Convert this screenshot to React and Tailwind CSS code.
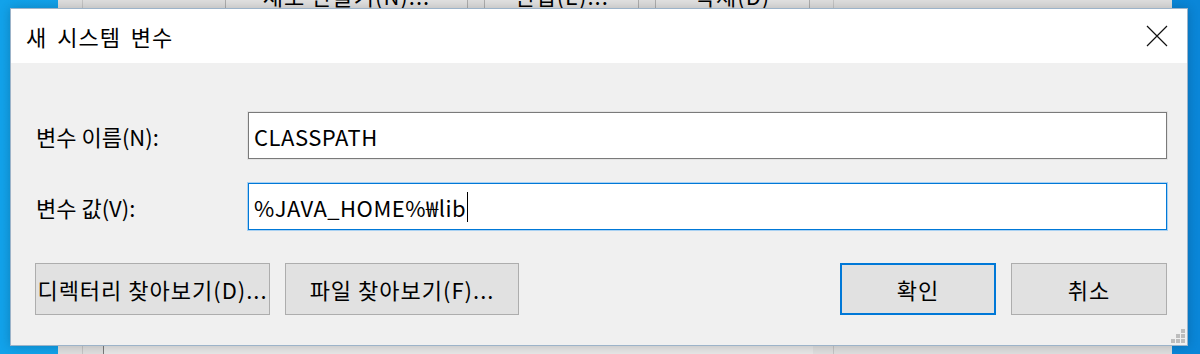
import React from "react";

const font = { fontFamily: '"Noto Sans CJK KR", "Noto Sans", sans-serif' };

function BgButton({ w, label }) {
  return (
    <div
      className={`${w} h-[52px] shrink-0 border border-[#adadad] bg-[#e1e1e1] flex items-center justify-center text-[22px] tracking-[1px] text-black leading-none`}
    >
      {label}
    </div>
  );
}

function Button({ w, label, primary }) {
  return (
    <div
      className={`${w} h-[52px] shrink-0 flex items-center justify-center bg-[#e1e1e1] text-[22px] tracking-[1px] text-black leading-none whitespace-nowrap ${
        primary ? "border-2 border-[#0078d7]" : "border border-[#adadad]"
      }`}
    >
      {label}
    </div>
  );
}

export default function App() {
  return (
    <div
      className="relative w-[1200px] h-[354px] overflow-hidden bg-[linear-gradient(90deg,#12a2ea,#0a86d8)]"
      style={font}
    >
      {/* underlying window */}
      <div className="absolute left-[58px] top-0 w-[1114px] h-full bg-[#dedede]">
        <div className="flex items-start mt-[-31px] pl-[167px]">
          <BgButton w="w-[243px]" label="새로 만들기(N)..." />
          <div className="w-[16px]" />
          <BgButton w="w-[155px]" label="편집(E)..." />
          <div className="w-[16px]" />
          <BgButton w="w-[155px]" label="삭제(D)" />
        </div>
        <div className="absolute left-[24px] top-0 h-full w-px bg-[#c4c4c4]" />
        <div className="absolute left-[775px] top-0 h-full w-px bg-[#c4c4c4]" />
        <div className="absolute left-[45px] top-[345px] w-[710px] h-[10px] border-t border-l border-[#7a7a7a] bg-[#e6e6e6]" />
      </div>

      {/* dialog */}
      <div className="absolute left-[10px] top-[8px] w-[1178px] h-[338px] border border-[#9cb3c9] bg-[#f0f0f0] flex flex-col shadow-[0_0_10px_rgba(0,0,0,0.2)]">
        <div className="h-[54px] bg-white flex items-center justify-between pl-[15px] pr-[19px] shrink-0">
          <span className="text-[22px] tracking-[1px] [word-spacing:4px] text-black leading-none">
            새 시스템 변수
          </span>
          <svg width="22" height="22" viewBox="0 0 22 22">
            <path d="M1 1 L21 21 M21 1 L1 21" stroke="#111" strokeWidth="1.2" />
          </svg>
        </div>

        <div className="relative flex-1 flex flex-col pt-[49px] pl-[25px] pr-[20px]">
          <div className="flex items-center">
            <div className="w-[212px] text-[22px] text-black leading-none">변수 이름(N):</div>
            <div className="flex-1 h-[47px] bg-white border border-[#7a7a7a] outline outline-1 outline-[#e3e3e3] flex items-center pl-[5px] text-[22px] tracking-[0.5px] text-black leading-none">
              CLASSPATH
            </div>
          </div>
          <div className="flex items-center mt-[24px]">
            <div className="w-[212px] text-[22px] text-black leading-none">변수 값(V):</div>
            <div className="flex-1 h-[47px] bg-white border border-[#0078d7] outline outline-1 outline-[#a9d1f2] flex items-center pl-[5px] text-[22px] tracking-[0.5px] text-black leading-none">
              <span>%JAVA_HOME%₩lib</span>
              <span className="w-px h-[30px] bg-black ml-[1px]" />
            </div>
          </div>

          <div className="flex items-center mt-[33px] ml-[-1px]">
            <Button w="w-[235px]" label="디렉터리 찾아보기(D)..." />
            <div className="w-[15px]" />
            <Button w="w-[234px]" label="파일 찾아보기(F)..." />
            <div className="flex-1" />
            <Button w="w-[156px]" label="확인" primary />
            <div className="w-[15px]" />
            <Button w="w-[156px]" label="취소" />
          </div>

          {/* resize grip */}
          <svg className="absolute right-[1px] bottom-[1px]" width="15" height="15" viewBox="0 0 15 15">
            <rect x="10" y="0" width="4" height="4" fill="#bdbdbd" />
            <rect x="5" y="5" width="4" height="4" fill="#bdbdbd" />
            <rect x="10" y="5" width="4" height="4" fill="#bdbdbd" />
            <rect x="0" y="10" width="4" height="4" fill="#bdbdbd" />
            <rect x="5" y="10" width="4" height="4" fill="#bdbdbd" />
            <rect x="10" y="10" width="4" height="4" fill="#bdbdbd" />
          </svg>
        </div>
      </div>
    </div>
  );
}
